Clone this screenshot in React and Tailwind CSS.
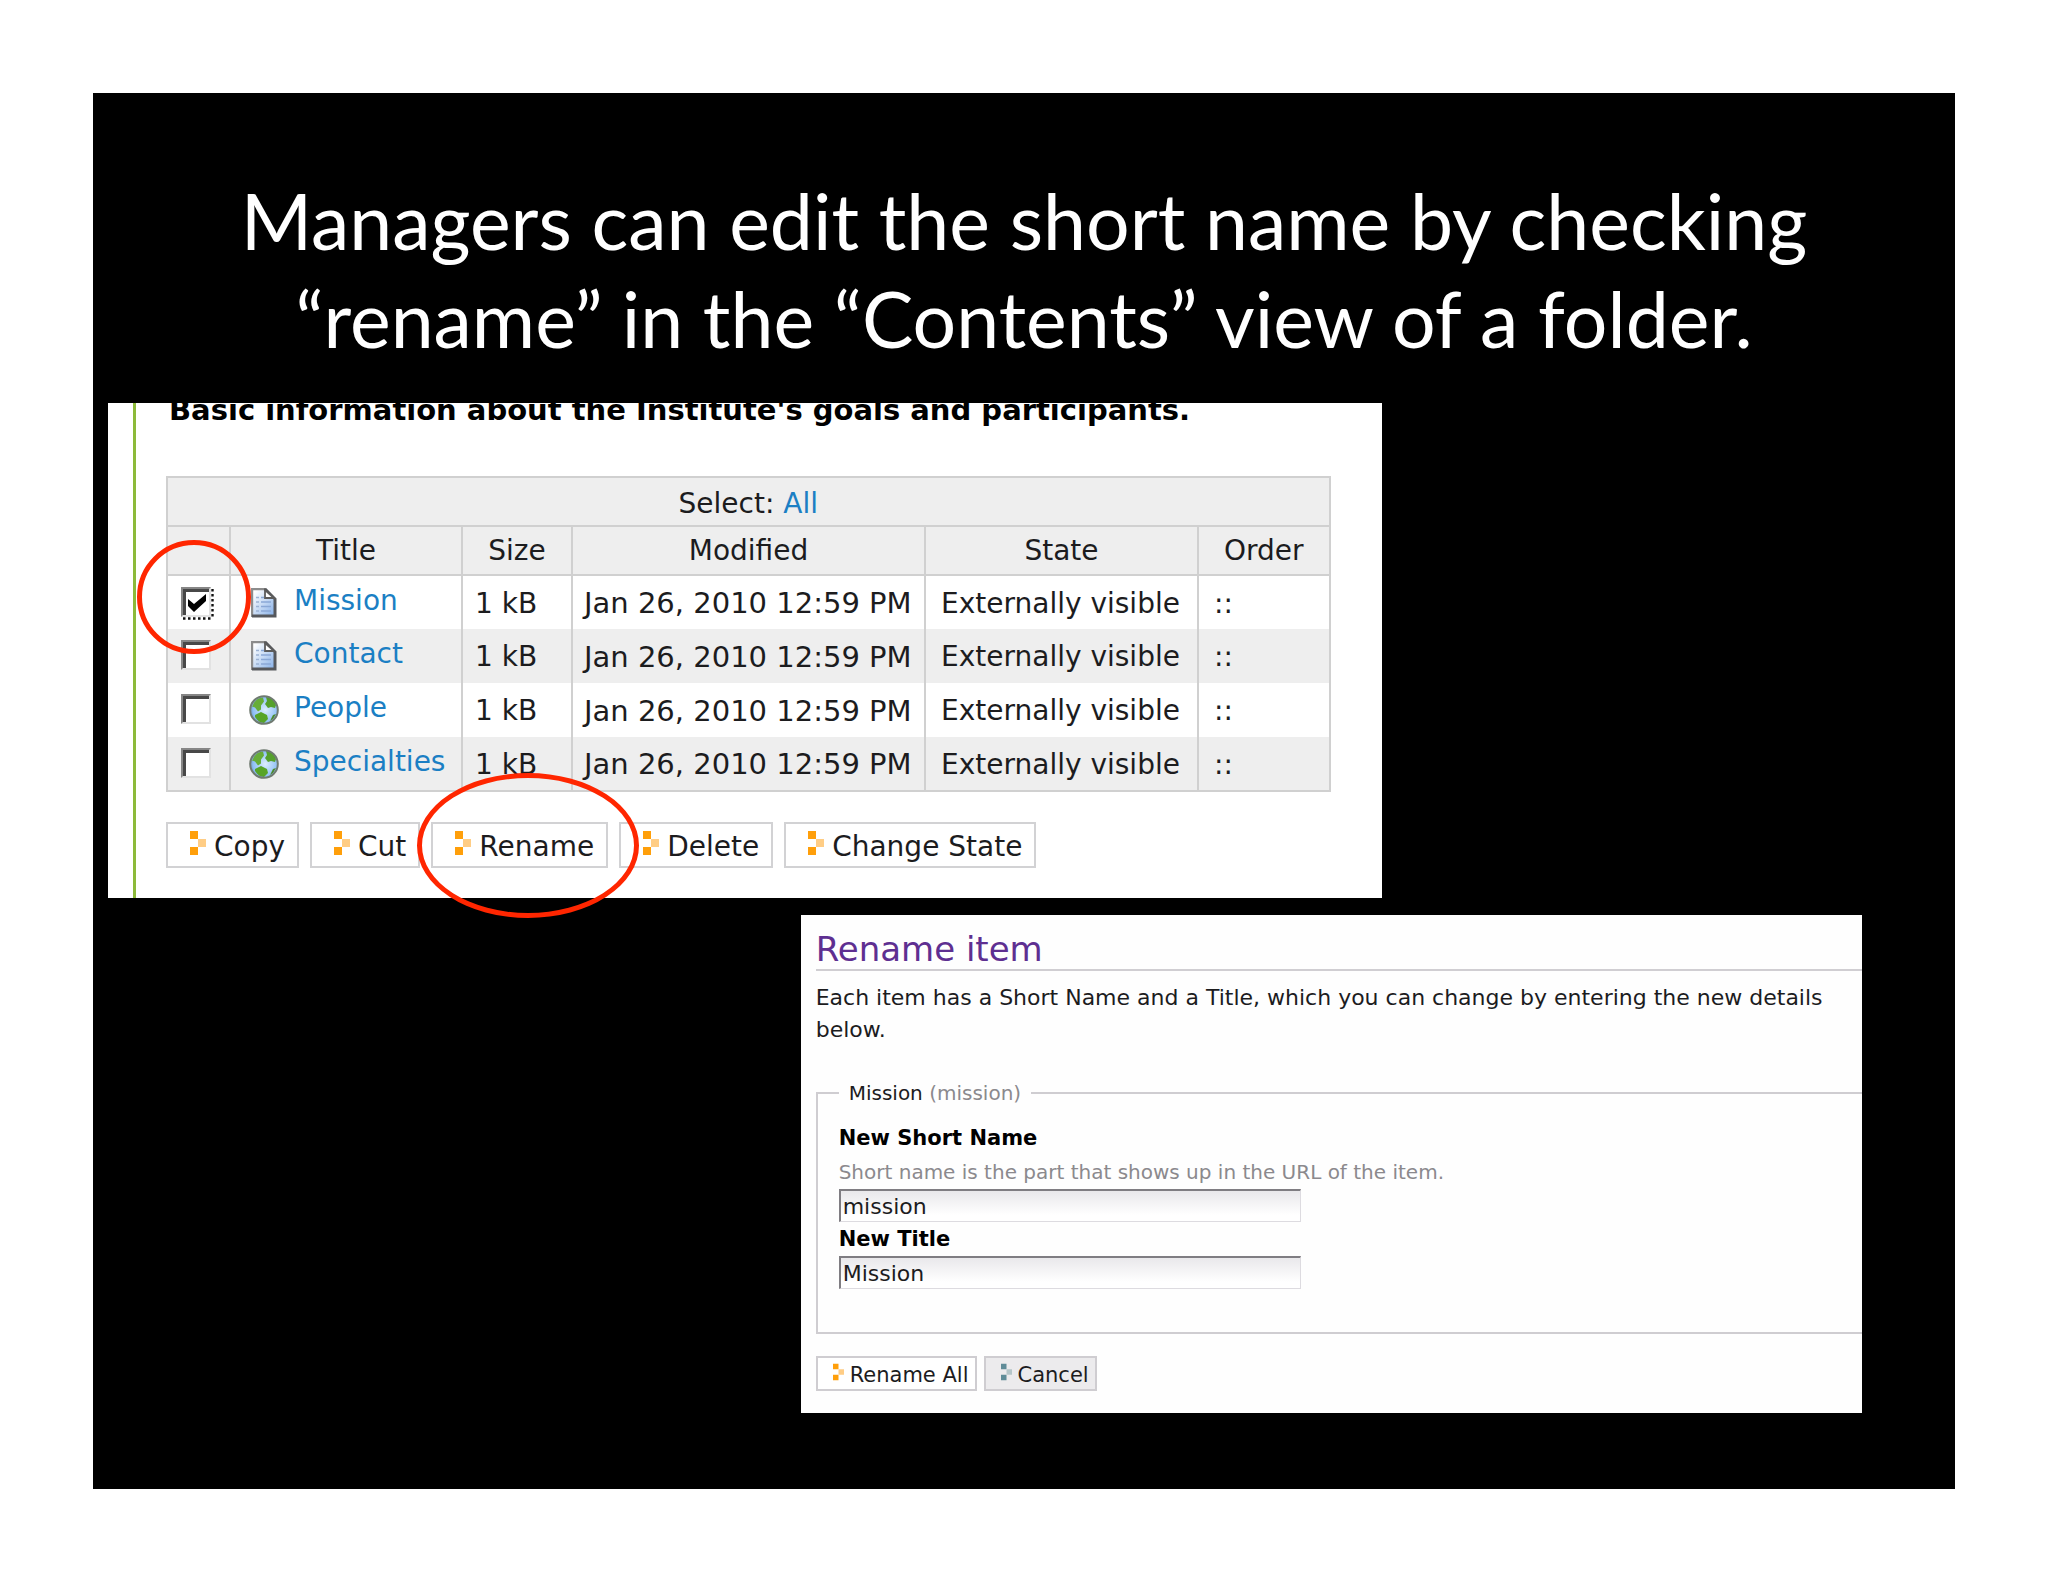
import { useState } from 'react'
import clsx from 'clsx'

const items = [
  { id: 'mission', title: 'Mission', type: 'page', checked: true },
  { id: 'contact', title: 'Contact', type: 'page', checked: false },
  { id: 'people', title: 'People', type: 'site', checked: false },
  { id: 'specialties', title: 'Specialties', type: 'site', checked: false },
]

function PageIcon() {
  return (
    <svg viewBox="0 0 26 30" className="w-[26px] h-[30px]" aria-hidden="true">
      <defs>
        <linearGradient id="page-fill" x1="0" y1="0" x2="1" y2="1">
          <stop offset="0.1" stopColor="#ffffff" />
          <stop offset="0.9" stopColor="#8fb6ea" />
        </linearGradient>
      </defs>
      <path d="M1 1h14l9 9v19H1z" fill="url(#page-fill)" />
      <path d="M1 29V1h14" fill="none" stroke="#8c8c8c" strokeWidth="2.4" />
      <path d="M14 1l10 10v17H1" fill="none" stroke="#56585c" strokeWidth="3" />
      <path d="M14 2v8h9z" fill="#fff" stroke="#5c5c5c" strokeWidth="1.8" />
      <path d="M5 9.500h3M5 14h3M5 18.500h3M5 23h3" stroke="#9cb2d4" strokeWidth="1.600" />
      <path d="M10 9.500h3M10 14h10M10 18.500h10M10 23h10" stroke="#8aa8d6" strokeWidth="1.600" />
    </svg>
  )
}

function SiteIcon() {
  return (
    <svg viewBox="0 0 30 30" className="w-[30px] h-[30px]" aria-hidden="true">
      <defs>
        <radialGradient id="globe-sea" cx="0.55" cy="0.5" r="0.6">
          <stop offset="0" stopColor="#dcedfe" />
          <stop offset="0.75" stopColor="#8fc0f5" />
          <stop offset="1" stopColor="#6b93bd" />
        </radialGradient>
      </defs>
      <circle cx="15" cy="15" r="13.5" fill="url(#globe-sea)" />
      <path d="M4 10C6 5 9 3 14 2.500l1 4-3 4v4l-3 2-3-4-3-1z" fill="#67ad38" />
      <path d="M17 2c5 0 9 4 10 8l-1 3-4-1-3 1-3-4 2-3z" fill="#55a02c" />
      <path d="M6 20l6-3 6 3 1 4-4 4c-4 0-7-3-9-6z" fill="#57a428" />
      <path d="M24 20l3-1-3 5-3 2z" fill="#4d8a2b" />
      <circle cx="15" cy="15" r="13.8" fill="none" stroke="#6f7a70" strokeWidth="2" />
    </svg>
  )
}

function Bullet({ small, muted }) {
  return (
    <svg
      viewBox="0 0 16 24"
      className={clsx('shrink-0 mb-1', small ? 'w-[11px] h-[18px]' : 'w-[16px] h-[24px]')}
      aria-hidden="true"
    >
      <rect x="0" y="0" width="8" height="8" fill={muted ? '#5f8c98' : '#ff9f0a'} />
      <rect x="0" y="16" width="8" height="8" fill={muted ? '#5f8c98' : '#ff9f0a'} />
      <rect x="8" y="8" width="8" height="8" fill={muted ? '#b5c6c9' : '#ffcd85'} />
    </svg>
  )
}

function ActionButton({ children }) {
  return (
    <button
      type="button"
      className="flex items-center gap-2 h-[46px] pl-[22px] pr-3 border-2 border-[#d2d2d4] bg-white text-[28px] leading-none whitespace-nowrap"
    >
      <Bullet />
      <span className="pt-1">{children}</span>
    </button>
  )
}

function FormButton({ children, muted }) {
  return (
    <button
      type="button"
      className={clsx(
        'flex items-center gap-[6px] h-[35px] pl-[15px] pr-[6px] border-2 border-[#cfcdd1] text-[21px] leading-none whitespace-nowrap',
        muted ? 'bg-[#ecebed]' : 'bg-white'
      )}
    >
      <Bullet small muted={muted} />
      <span className="pt-[3px]">{children}</span>
    </button>
  )
}

function RowCheckbox({ label, checked, onChange }) {
  return (
    <span className="relative block w-[30px] h-[30px] ml-[13px] mb-[2px]">
      <input
        type="checkbox"
        aria-label={label}
        checked={checked}
        onChange={onChange}
        className="block appearance-none w-[30px] h-[30px] bg-white border-2 border-t-[#868686] border-l-[#868686] border-r-[#e2e2e2] border-b-[#e2e2e2] shadow-[inset_3px_3px_0_#484848]"
      />
      {checked && (
        <svg viewBox="0 0 34 34" className="absolute top-0 left-0 w-[34px] h-[34px] pointer-events-none" aria-hidden="true">
          <path d="M7 12l6 5L25 7v7L13 25l-6-6z" fill="#000" />
          <path d="M31.500 2v30M2 31.500h30" fill="none" stroke="#111" strokeWidth="2.400" strokeDasharray="2.500 2.500" />
        </svg>
      )}
    </span>
  )
}

function ContentsPanel() {
  const [rows, setRows] = useState(items)

  const toggle = (id) => {
    setRows(rows.map((r) => (r.id === id ? { ...r, checked: !r.checked } : r)))
  }

  const selectAll = (e) => {
    e.preventDefault()
    setRows(rows.map((r) => ({ ...r, checked: true })))
  }

  const cell = 'border-x-2 border-[#d0d0d0] whitespace-nowrap'
  const head = 'border-2 border-[#d0d0d0] font-normal'

  return (
    <section className="relative w-[68.4%] ml-[15px]">
      <div className="overflow-hidden bg-white pl-[25px]">
        <div className="border-l-3 border-[#8dba3a] pl-[30px] pr-[51px] pb-[30px]">
          <h2 className="-mt-3 h-[85px] pl-[3px] font-bold text-[29px] leading-[38px] whitespace-nowrap text-black">
            Basic information about the Institute's goals and participants.
          </h2>
          <table className="w-full table-fixed border-collapse border-2 border-[#d0d0d0] text-[28px] leading-none">
            <colgroup>
              <col className="w-[63px]" />
              <col className="w-[232px]" />
              <col className="w-[110px]" />
              <col className="w-[353px]" />
              <col className="w-[273px]" />
              <col />
            </colgroup>
            <thead className="bg-[#eeeeee]">
              <tr className="h-[49px]">
                <th colSpan={6} className={clsx(head, 'pt-1')}>
                  Select:{' '}
                  <a href="#all" onClick={selectAll} className="text-[#1b7fc4]">All</a>
                </th>
              </tr>
              <tr className="h-[49px]">
                <th className={head}></th>
                <th className={head}>Title</th>
                <th className={head}>Size</th>
                <th className={head}>Modified</th>
                <th className={head}>State</th>
                <th className={head}>Order</th>
              </tr>
            </thead>
            <tbody>
              {rows.map((row) => (
                <tr key={row.id} className="h-[54px] even:bg-[#eeeeee]">
                  <td className={cell}>
                    <RowCheckbox label={row.title} checked={row.checked} onChange={() => toggle(row.id)} />
                  </td>
                  <td className={cell}>
                    <div className="flex items-center pl-[18px]">
                      <span className="flex justify-center w-[30px] mr-[15px]">
                        {row.type === 'page' ? <PageIcon /> : <SiteIcon />}
                      </span>
                      <a href={`#${row.id}`} className="pb-1 text-[#1b7fc4]">{row.title}</a>
                    </div>
                  </td>
                  <td className={clsx(cell, 'pl-3 pt-[2px]')}>1 kB</td>
                  <td className={clsx(cell, 'pl-[11px] pt-[2px] text-[29px]')}>Jan 26, 2010 12:59 PM</td>
                  <td className={clsx(cell, 'pl-[15px] pt-[2px]')}>Externally visible</td>
                  <td className={clsx(cell, 'pl-[15px] pt-[2px]')}>::</td>
                </tr>
              ))}
            </tbody>
          </table>
          <div className="flex gap-[11px] mt-[30px]">
            <ActionButton>Copy</ActionButton>
            <ActionButton>Cut</ActionButton>
            <ActionButton>Rename</ActionButton>
            <ActionButton>Delete</ActionButton>
            <ActionButton>Change State</ActionButton>
          </div>
        </div>
      </div>
      {/* highlights over the checkbox and the rename button */}
      <div className="absolute left-[29px] top-[137px] w-[114px] h-[114px] rounded-full border-5 border-[#ff2600] pointer-events-none" />
      <div className="absolute left-[309px] top-[370px] w-[222px] h-[145px] rounded-[50%] border-5 border-[#ff2600] pointer-events-none" />
    </section>
  )
}

function TextField({ id, label, help, defaultValue }) {
  return (
    <div>
      <label htmlFor={id} className="block font-bold text-[21px] leading-[34px] text-black">{label}</label>
      {help && <p className="text-[20px] leading-[34px] text-[#8b898d]">{help}</p>}
      <input
        id={id}
        type="text"
        defaultValue={defaultValue}
        className="block w-[462px] h-[33px] px-[2px] border-t-2 border-l-2 border-r border-b border-t-[#7f7d82] border-l-[#7f7d82] border-r-[#dddbe0] border-b-[#dddbe0] bg-linear-to-b from-[#e9e8eb] to-white to-80% text-[22px] outline-none"
      />
    </div>
  )
}

function RenamePanel() {
  return (
    <section className="self-end w-[57%] mr-[93px] mt-[17px] pl-[15px] pb-[22px] bg-[#fefefe]">
      <h2 className="h-[56px] border-b-2 border-[#d0ced2] text-[34px] leading-[68px] text-[#5e2f91]">Rename item</h2>
      <p className="mt-[11px] text-[22px] leading-[32px]">
        Each item has a Short Name and a Title, which you can change by entering the new details below.
      </p>
      <form onSubmit={(e) => e.preventDefault()}>
        <fieldset className="mt-[32px] pl-[21px] pb-[43px] border-2 border-r-0 border-[#cfcdd1]">
          <legend className="px-[10px] text-[20px] leading-[30px]">
            Mission <span className="text-[#8b898d]">(mission)</span>
          </legend>
          <div className="mt-[13px]">
            <TextField
              id="short-name"
              label="New Short Name"
              help="Short name is the part that shows up in the URL of the item."
              defaultValue="mission"
            />
            <TextField id="new-title" label="New Title" defaultValue="Mission" />
          </div>
        </fieldset>
        <div className="flex gap-[7px] mt-[22px]">
          <FormButton>Rename All</FormButton>
          <FormButton muted>Cancel</FormButton>
        </div>
      </form>
    </section>
  )
}

export default function App() {
  return (
    <div className="min-h-screen bg-white p-[93px] font-['DejaVu_Sans',Verdana,sans-serif] text-[#1c1c1e]">
      <main className="flex flex-col bg-black pb-[76px]">
        <h1 className="px-[100px] pt-[78px] pb-[36px] text-center font-[Lato,sans-serif] text-[77px] leading-[98px] text-white">
          Managers can edit the short name by checking
          <br />
          “rename” in the “Contents” view of a folder.
        </h1>
        <ContentsPanel />
        <RenamePanel />
      </main>
    </div>
  )
}
